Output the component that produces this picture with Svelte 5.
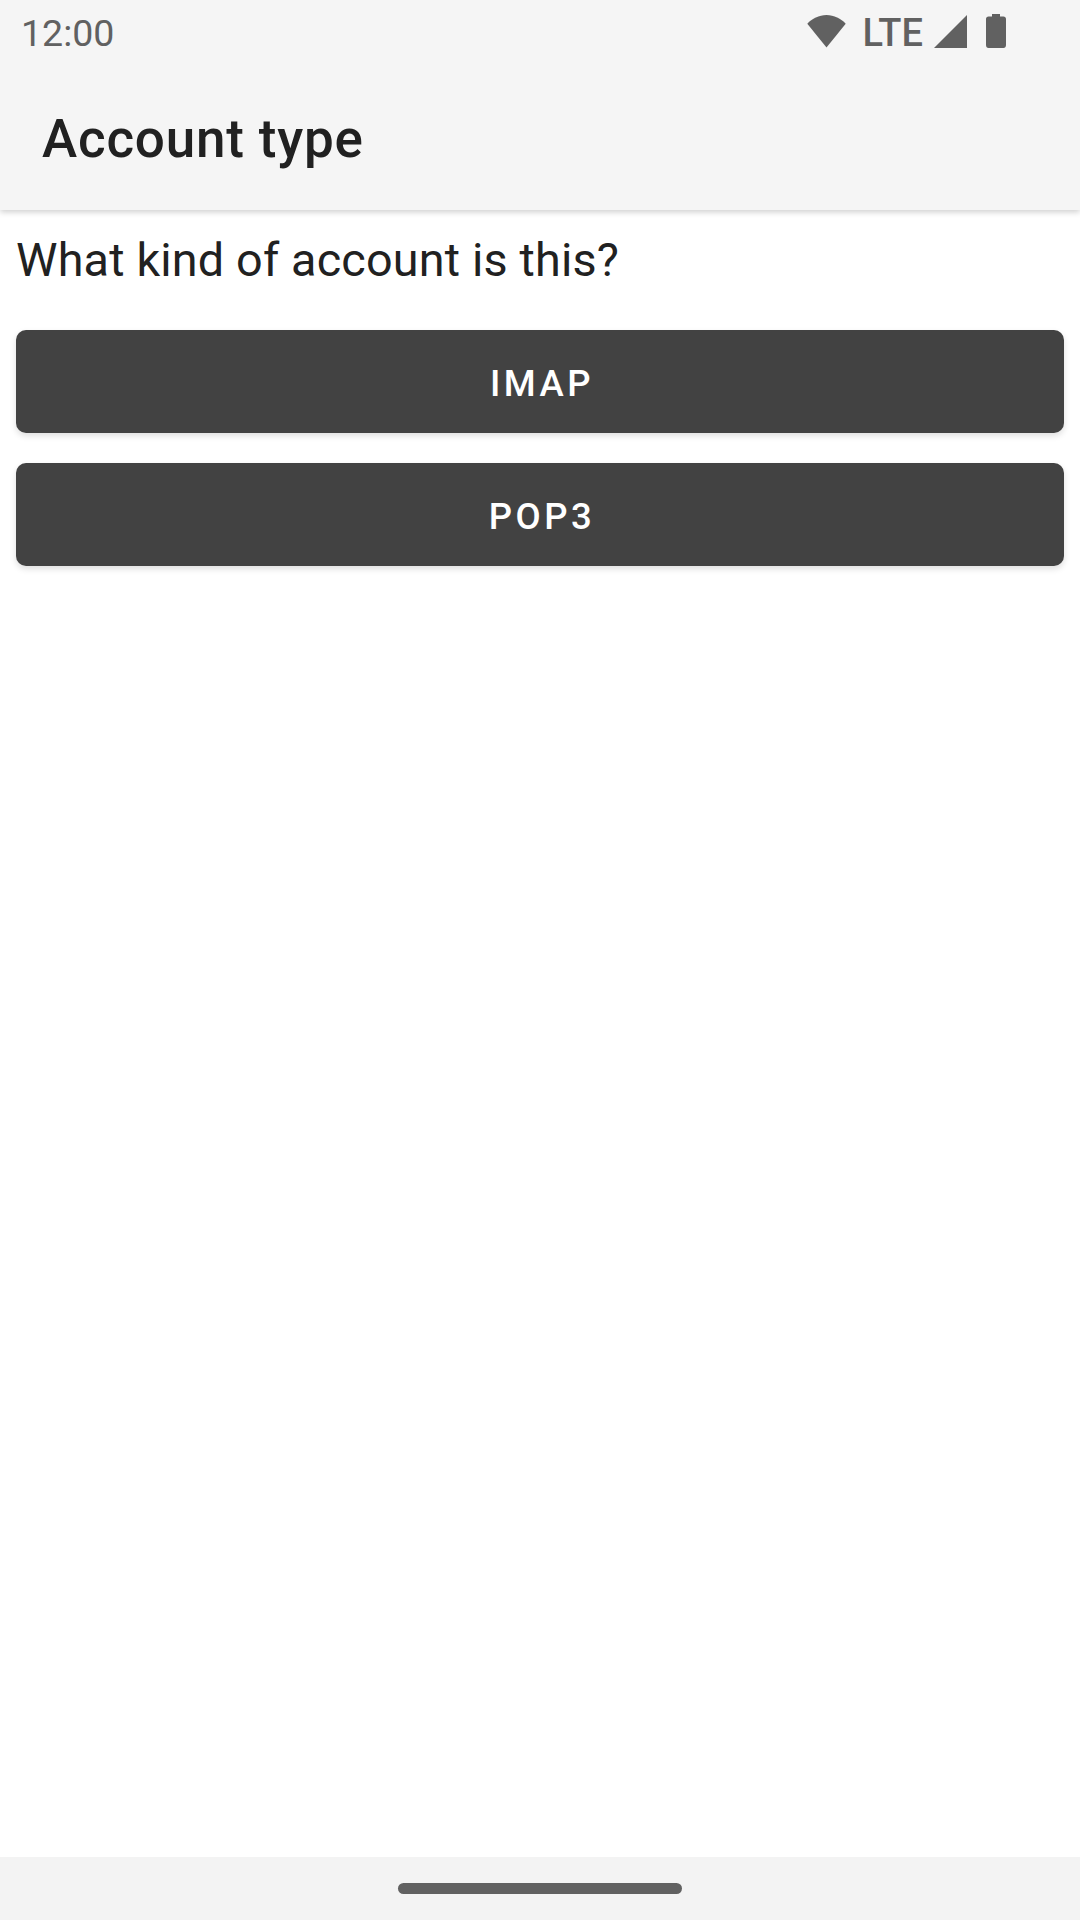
<script>
  const choices = ['IMAP', 'POP3'];
</script>

<div class="screen">
  <header class="top">
    <div class="status">
      <span class="time">12:00</span>
      <div class="icons">
        <svg class="wifi" width="40" height="33" viewBox="0 0 40 33"><path d="M0.300 8.700C5 3.500 12 0 19.500 0C27 0 34 3.500 38.700 8.700L19.500 32.500Z" /></svg>
        <span class="lte">LTE</span>
        <svg class="signal" width="33" height="33" viewBox="0 0 33 33"><path d="M33 0V33H0Z" /></svg>
        <svg class="battery" width="20" height="34" viewBox="0 0 20 34"><path d="M6 0H14V2.500H17.500C19 2.500 20 3.500 20 5V31C20 32.800 19 34 17.500 34H2.500C1 34 0 32.800 0 31V5C0 3.500 1 2.500 2.500 2.500H6Z" /></svg>
      </div>
    </div>
    <div class="appbar"><h1>Account type</h1></div>
  </header>

  <main>
    <p class="question">What kind of account is this?</p>
    {#each choices as choice}
      <button type="button">{choice}</button>
    {/each}
  </main>

  <footer class="nav"><div class="pill"></div></footer>
</div>

<style>
  :global(body) {
    margin: 0;
    background: #fff;
  }
  .screen {
    width: 1080px;
    height: 1920px;
    display: flex;
    flex-direction: column;
    font-family: Roboto, "Noto Sans", sans-serif;
    overflow: hidden;
    background: #fff;
  }
  .top {
    height: 210px;
    flex: none;
    background: #f5f5f5;
    box-shadow: 0 2px 6px rgba(0, 0, 0, 0.2);
    position: relative;
    z-index: 1;
  }
  .status {
    height: 66px;
    box-sizing: border-box;
    padding: 0 74px 0 21px;
    display: flex;
    justify-content: space-between;
    align-items: center;
    color: #616161;
  }
  .time {
    font-size: 37.5px;
    line-height: 66px;
  }
  .icons {
    display: flex;
    align-items: center;
    margin-top: -4px;
  }
  .icons svg {
    fill: #616161;
    display: block;
  }
  .lte {
    font-size: 38px;
    font-weight: 500;
    line-height: 40px;
    margin-left: 15px;
    margin-right: 11px;
    position: relative;
    top: 2px;
  }
  .battery {
    margin-left: 19px;
  }
  .appbar {
    height: 144px;
    padding-left: 42px;
    display: flex;
    align-items: center;
  }
  h1 {
    margin: 2px 0 0;
    font-size: 53px;
    letter-spacing: 0.8px;
    font-weight: 500;
    color: #212121;
  }
  main {
    flex: 1;
    padding: 0 16px;
    display: flex;
    flex-direction: column;
  }
  .question {
    margin: 0;
    height: 120px;
    padding-top: 20px;
    box-sizing: border-box;
    font-size: 46.75px;
    letter-spacing: 0.17px;
    line-height: 60px;
    color: #212121;
  }
  button {
    height: 103px;
    margin-bottom: 30px;
    padding: 4px 0 0 4px;
    border: 0;
    border-radius: 10px;
    background: #424242;
    color: #fff;
    font-family: inherit;
    font-size: 36.5px;
    font-weight: 500;
    letter-spacing: 3.5px;
    box-shadow: 0 3px 6px rgba(0, 0, 0, 0.13);
  }
  .nav {
    height: 63px;
    flex: none;
    background: #f3f3f3;
    display: flex;
    justify-content: center;
    padding-top: 26px;
    box-sizing: border-box;
  }
  .pill {
    width: 284px;
    height: 11px;
    border-radius: 6px;
    background: #616161;
  }
</style>
